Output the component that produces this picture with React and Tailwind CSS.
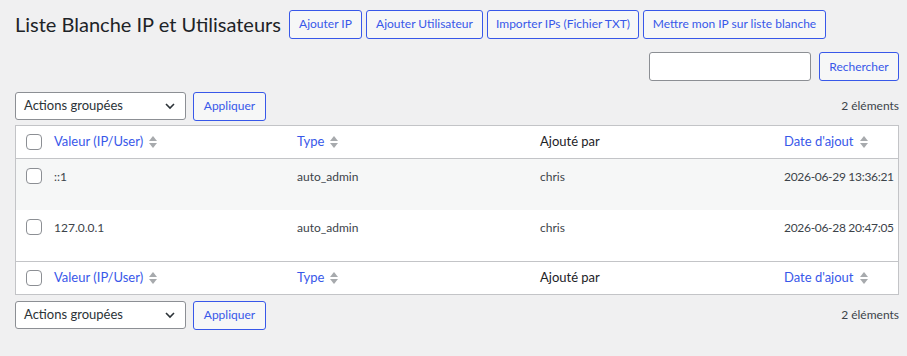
import React from "react";

const font = { fontFamily: 'Lato, "Noto Sans", sans-serif' };

const Btn = ({ children, className = "" }) => (
  <button
    className={`h-[29px] px-0 border border-[#3858e9] rounded-[3px] bg-[#f6f7f7] text-[12px] text-[#3858e9] leading-none whitespace-nowrap ${className}`}
  >
    {children}
  </button>
);

const Check = () => (
  <span className="block w-4 h-4 border border-[#8c8f94] rounded-[4px] bg-white" />
);

const SortIcon = () => (
  <svg width="10" height="14" viewBox="0 0 10 14" className="ml-[5px]">
    <path d="M5 1 L9 6 L1 6 Z" fill="#a7aaad" />
    <path d="M1 8 L9 8 L5 13 Z" fill="#a7aaad" />
  </svg>
);

const BulkActions = () => (
  <div className="flex items-center gap-[7px]">
    <div className="w-[171px] h-[28px] border border-[#8c8f94] rounded-[3px] bg-white flex items-center justify-between pl-[8px] pr-[9px] text-[13px] text-[#2c3338]">
      <span>Actions groupées</span>
      <svg width="12" height="8" viewBox="0 0 12 8">
        <path d="M2 2 L6 6 L10 2" stroke="#2c3338" strokeWidth="1.6" fill="none" />
      </svg>
    </div>
    <Btn className="w-[73px] h-[28px]">Appliquer</Btn>
  </div>
);

const HeaderRow = ({ top }) => (
  <div
    className={`grid grid-cols-[30px_243px_243px_244px_1fr] h-[33px] items-center text-[13px] ${
      top ? "border-b" : "border-t"
    } border-[#c3c4c7]`}
  >
    <div className="pl-[10px]">
      <Check />
    </div>
    <div className="pl-[8px] flex items-center text-[#3858e9]">
      Valeur (IP/User)
      <SortIcon />
    </div>
    <div className="pl-[8px] flex items-center text-[#3858e9]">
      Type
      <SortIcon />
    </div>
    <div className="pl-[8px] text-[#1d2327]">Ajouté par</div>
    <div className="pl-[8px] flex items-center text-[#3858e9] whitespace-nowrap">
      Date d'ajout
      <SortIcon />
    </div>
  </div>
);

const rows = [
  { value: "::1", type: "auto_admin", by: "chris", date: "2026-06-29 13:36:21" },
  { value: "127.0.0.1", type: "auto_admin", by: "chris", date: "2026-06-28 20:47:05" },
];

export default function App() {
  return (
    <div className="w-[907px] h-[356px] bg-[#f0f0f1] text-[#3c434a] overflow-hidden pl-[15px] pr-[8px]" style={font}>
      <div className="flex items-center h-[48px]">
        <h1 className="w-[274px] text-[20px] text-[#1d2327] leading-none whitespace-nowrap">
          Liste Blanche IP et Utilisateurs
        </h1>
        <div className="flex gap-[4px]">
          <Btn className="w-[73px]">Ajouter IP</Btn>
          <Btn className="w-[117px]">Ajouter Utilisateur</Btn>
          <Btn className="w-[152px]">Importer IPs (Fichier TXT)</Btn>
          <Btn className="w-[183px]">Mettre mon IP sur liste blanche</Btn>
        </div>
      </div>

      <div className="flex justify-end gap-[8px] mt-[4px]">
        <div className="w-[162px] h-[29px] border border-[#8c8f94] rounded-[3px] bg-white" />
        <Btn className="w-[80px]">Rechercher</Btn>
      </div>

      <div className="flex items-center justify-between mt-[11px] h-[28px]">
        <BulkActions />
        <span className="text-[12px]">2 éléments</span>
      </div>

      <div className="mt-[5px] border border-[#c3c4c7] bg-white">
        <HeaderRow top />
        {rows.map((r, i) => (
          <div
            key={r.value}
            className={`grid grid-cols-[30px_243px_243px_244px_1fr] h-[51px] text-[12px] ${
              i % 2 === 0 ? "bg-[#f6f7f7]" : "bg-white"
            }`}
          >
            <div className="pl-[10px] pt-[9px]">
              <Check />
            </div>
            <div className="pl-[8px] pt-[9px]">{r.value}</div>
            <div className="pl-[8px] pt-[9px]">{r.type}</div>
            <div className="pl-[8px] pt-[9px]">{r.by}</div>
            <div className="pl-[8px] pt-[9px] whitespace-nowrap tracking-[-0.3px]">{r.date}</div>
          </div>
        ))}
        <HeaderRow />
      </div>

      <div className="flex items-center justify-between mt-[6px] h-[28px]">
        <BulkActions />
        <span className="text-[12px]">2 éléments</span>
      </div>
    </div>
  );
}
